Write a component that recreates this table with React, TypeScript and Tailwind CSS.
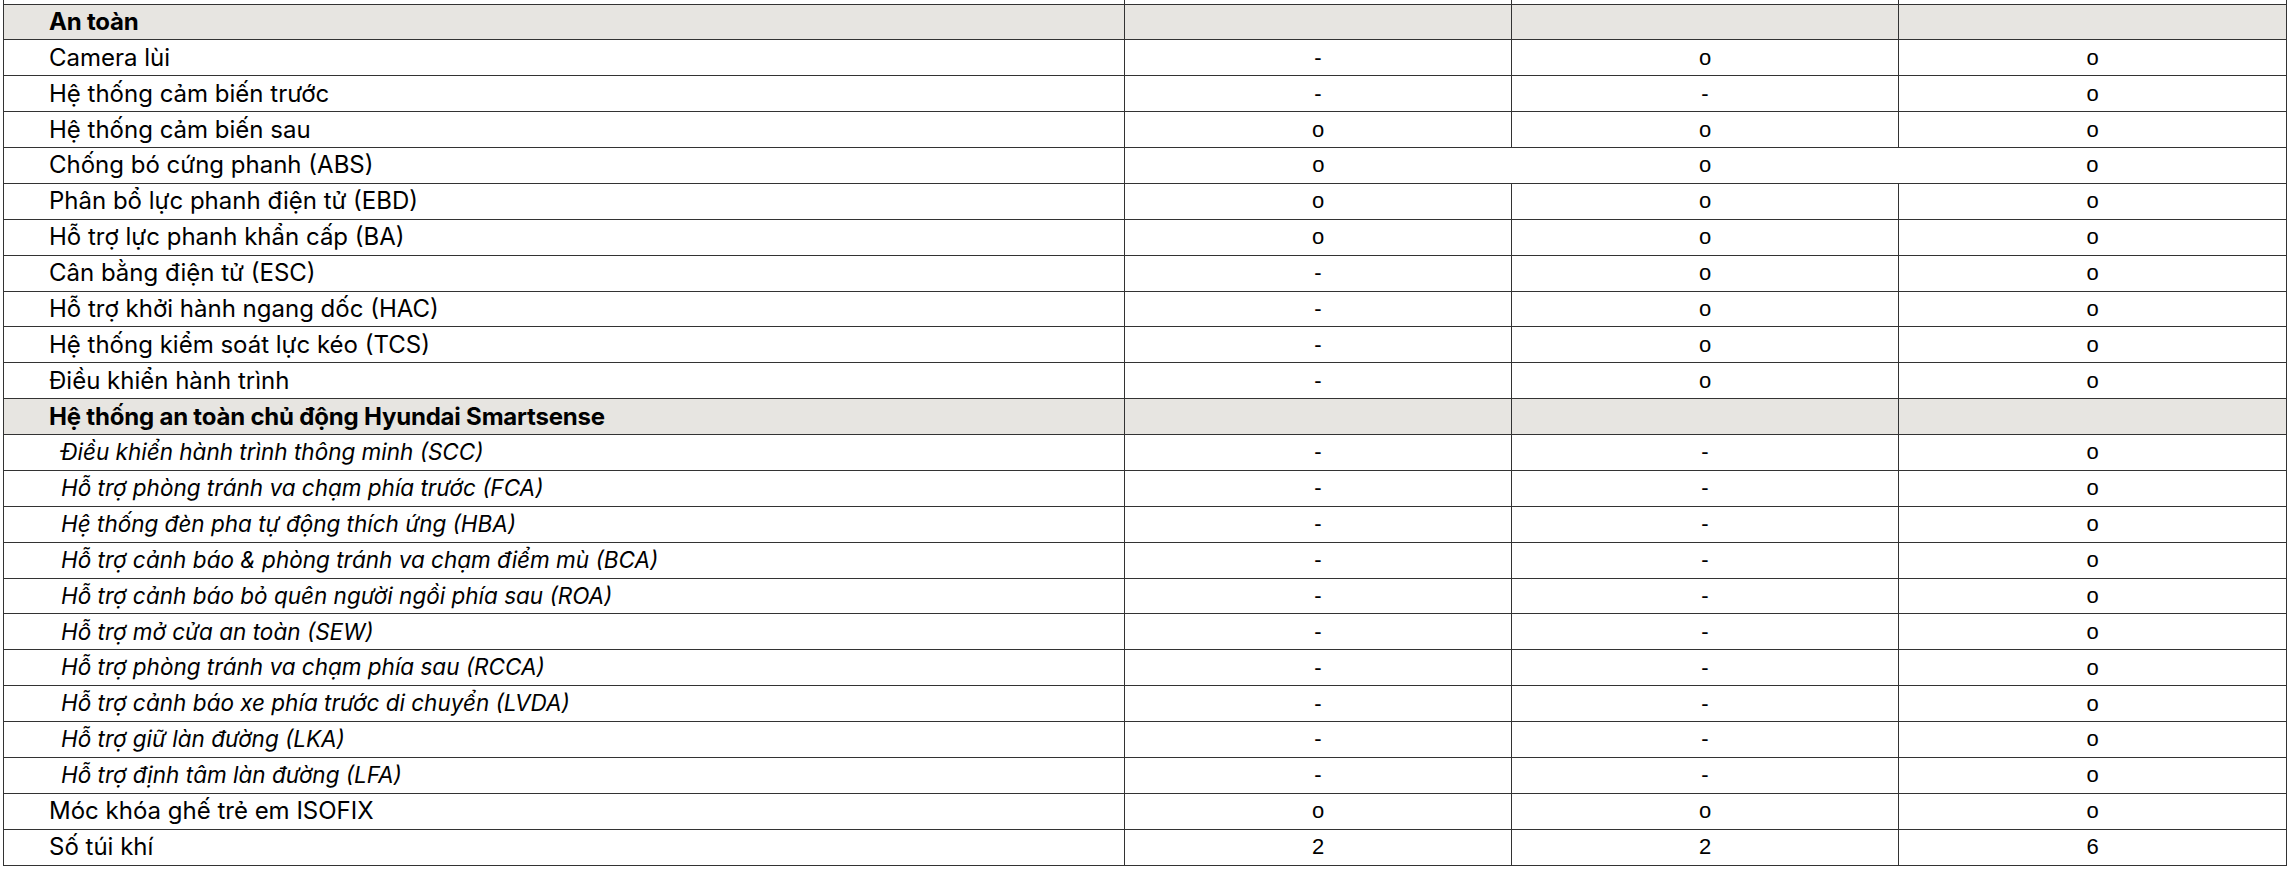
import React from 'react';

type Row = {
  label: string;
  kind: 'section' | 'item' | 'sub';
  values?: string[];
  merged?: boolean; // no inner borders between value columns
};

const rows: Row[] = [
  { label: 'An toàn', kind: 'section' },
  { label: 'Camera lùi', kind: 'item', values: ['-', 'o', 'o'] },
  { label: 'Hệ thống cảm biến trước', kind: 'item', values: ['-', '-', 'o'] },
  { label: 'Hệ thống cảm biến sau', kind: 'item', values: ['o', 'o', 'o'] },
  { label: 'Chống bó cứng phanh (ABS)', kind: 'item', values: ['o', 'o', 'o'], merged: true },
  { label: 'Phân bổ lực phanh điện tử (EBD)', kind: 'item', values: ['o', 'o', 'o'] },
  { label: 'Hỗ trợ lực phanh khẩn cấp (BA)', kind: 'item', values: ['o', 'o', 'o'] },
  { label: 'Cân bằng điện tử (ESC)', kind: 'item', values: ['-', 'o', 'o'] },
  { label: 'Hỗ trợ khởi hành ngang dốc (HAC)', kind: 'item', values: ['-', 'o', 'o'] },
  { label: 'Hệ thống kiểm soát lực kéo (TCS)', kind: 'item', values: ['-', 'o', 'o'] },
  { label: 'Điều khiển hành trình', kind: 'item', values: ['-', 'o', 'o'] },
  { label: 'Hệ thống an toàn chủ động Hyundai Smartsense', kind: 'section' },
  { label: 'Điều khiển hành trình thông minh (SCC)', kind: 'sub', values: ['-', '-', 'o'] },
  { label: 'Hỗ trợ phòng tránh va chạm phía trước (FCA)', kind: 'sub', values: ['-', '-', 'o'] },
  { label: 'Hệ thống đèn pha tự động thích ứng (HBA)', kind: 'sub', values: ['-', '-', 'o'] },
  { label: 'Hỗ trợ cảnh báo & phòng tránh va chạm điểm mù (BCA)', kind: 'sub', values: ['-', '-', 'o'] },
  { label: 'Hỗ trợ cảnh báo bỏ quên người ngồi phía sau (ROA)', kind: 'sub', values: ['-', '-', 'o'] },
  { label: 'Hỗ trợ mở cửa an toàn (SEW)', kind: 'sub', values: ['-', '-', 'o'] },
  { label: 'Hỗ trợ phòng tránh va chạm phía sau (RCCA)', kind: 'sub', values: ['-', '-', 'o'] },
  { label: 'Hỗ trợ cảnh báo xe phía trước di chuyển (LVDA)', kind: 'sub', values: ['-', '-', 'o'] },
  { label: 'Hỗ trợ giữ làn đường (LKA)', kind: 'sub', values: ['-', '-', 'o'] },
  { label: 'Hỗ trợ định tâm làn đường (LFA)', kind: 'sub', values: ['-', '-', 'o'] },
  { label: 'Móc khóa ghế trẻ em ISOFIX', kind: 'item', values: ['o', 'o', 'o'] },
  { label: 'Số túi khí', kind: 'item', values: ['2', '2', '6'] },
];

const labelFont = { fontFamily: 'Inter, "Noto Sans", sans-serif' };
const valueFont = { fontFamily: '"Liberation Sans", Arial, sans-serif' };

export default function App() {
  return (
    <div className="bg-white w-[2292px] h-[872px] overflow-hidden pl-[3px]">
      <table className="table-fixed border-collapse w-[2283px] text-black">
        <colgroup>
          <col className="w-[1121px]" />
          <col className="w-[387px]" />
          <col className="w-[387px]" />
          <col className="w-[388px]" />
        </colgroup>
        <tbody>
          {/* tail of the row above, cut off by the viewport */}
          <tr className="h-[4px]">
            <td className="border-x border-[#333] p-0" />
            <td className="border-x border-[#333] p-0" />
            <td className="border-x border-[#333] p-0" />
            <td className="border-x border-[#333] p-0" />
          </tr>
          {rows.map((r, i) => {
            if (r.kind === 'section') {
              return (
                <tr key={i} className="h-[35.875px] bg-[#e7e5e1]">
                  <td className="border border-[#333] pl-[45px] p-0 text-[24px] font-bold leading-none tracking-[-0.2px]" style={labelFont}>
                    {r.label}
                  </td>
                  <td className="border border-[#333] p-0" />
                  <td className="border border-[#333] p-0" />
                  <td className="border border-[#333] p-0" />
                </tr>
              );
            }
            const vals = r.values ?? [];
            return (
              <tr key={i} className="h-[35.875px]">
                <td
                  className={`border border-[#333] p-0 leading-none ${
                    r.kind === 'sub' ? 'pl-[57px] italic text-[22.5px]' : 'pl-[45px] text-[24px]'
                  }`}
                  style={labelFont}
                >
                  {r.label}
                </td>
                {vals.map((v, j) => (
                  <td
                    key={j}
                    className={`border-y border-[#333] p-0 text-center text-[22px] leading-none ${
                      r.merged
                        ? j === 0
                          ? 'border-l'
                          : j === 2
                          ? 'border-r'
                          : ''
                        : 'border-x'
                    }`}
                    style={valueFont}
                  >
                    {v}
                  </td>
                ))}
              </tr>
            );
          })}
        </tbody>
      </table>
    </div>
  );
}
